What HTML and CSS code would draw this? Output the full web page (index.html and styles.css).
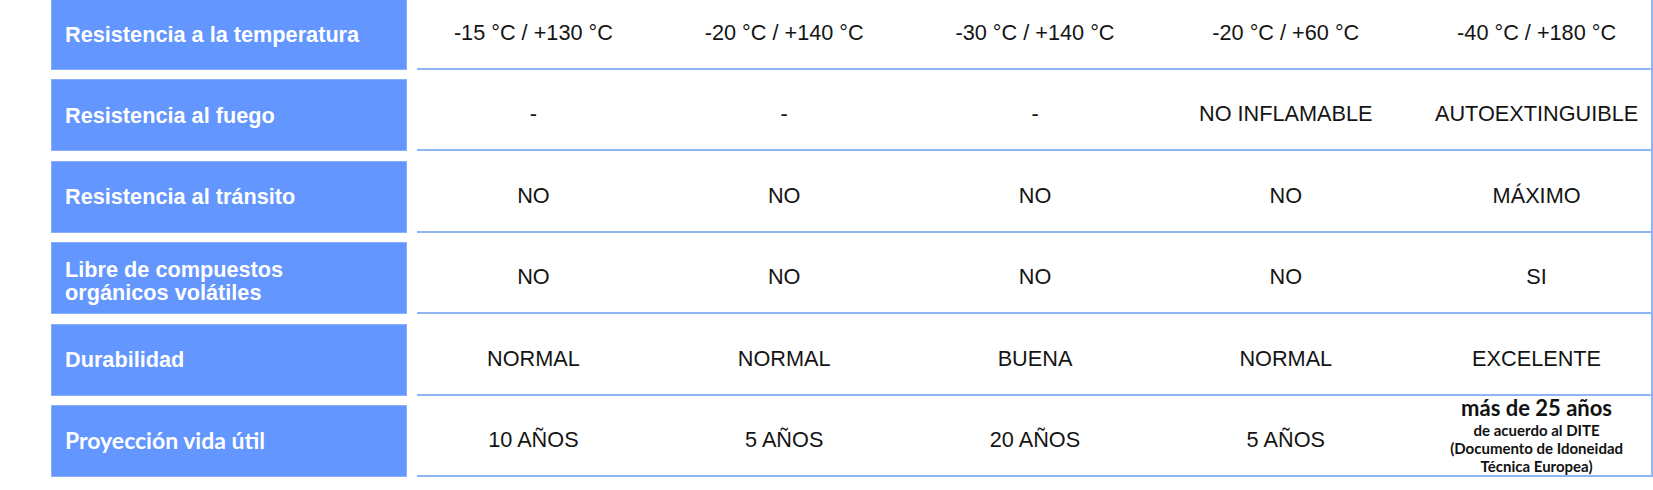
FILE: index.html
```html
<!DOCTYPE html>
<html lang="es">

<head>
    <meta charset="UTF-8">
    <meta name="viewport" content="width=device-width, initial-scale=1.0">
    <link rel="stylesheet" href="styles.css">
</head>

<body>
    <div class="spec-table">
        <div class="row">
            <div class="label">Resistencia a la temperatura</div>
            <div class="data">
                <div class="cells">
                    <div class="cell">-15 °C / +130 °C</div>
                    <div class="cell">-20 °C / +140 °C</div>
                    <div class="cell">-30 °C / +140 °C</div>
                    <div class="cell">-20 °C / +60 °C</div>
                    <div class="cell">-40 °C / +180 °C</div>
                </div>
            </div>
        </div>
        <div class="row">
            <div class="label">Resistencia al fuego</div>
            <div class="data">
                <div class="cells">
                    <div class="cell">-</div>
                    <div class="cell">-</div>
                    <div class="cell">-</div>
                    <div class="cell">NO INFLAMABLE</div>
                    <div class="cell">AUTOEXTINGUIBLE</div>
                </div>
            </div>
        </div>
        <div class="row">
            <div class="label">Resistencia al tránsito</div>
            <div class="data">
                <div class="cells">
                    <div class="cell">NO</div>
                    <div class="cell">NO</div>
                    <div class="cell">NO</div>
                    <div class="cell">NO</div>
                    <div class="cell">MÁXIMO</div>
                </div>
            </div>
        </div>
        <div class="row">
            <div class="label label-two">Libre de compuestos<br>orgánicos volátiles</div>
            <div class="data">
                <div class="cells">
                    <div class="cell">NO</div>
                    <div class="cell">NO</div>
                    <div class="cell">NO</div>
                    <div class="cell">NO</div>
                    <div class="cell">SI</div>
                </div>
            </div>
        </div>
        <div class="row">
            <div class="label">Durabilidad</div>
            <div class="data">
                <div class="cells">
                    <div class="cell">NORMAL</div>
                    <div class="cell">NORMAL</div>
                    <div class="cell">BUENA</div>
                    <div class="cell">NORMAL</div>
                    <div class="cell">EXCELENTE</div>
                </div>
            </div>
        </div>
        <div class="row row-last">
            <div class="label label-alt">Proyección vida útil</div>
            <div class="data">
                <div class="cells">
                    <div class="cell">10 AÑOS</div>
                    <div class="cell">5 AÑOS</div>
                    <div class="cell">20 AÑOS</div>
                    <div class="cell">5 AÑOS</div>
                    <div class="cell cell-note">
                        <div class="note">
                            <div class="note-big">más de 25 años</div>
                            <div>de acuerdo al DITE</div>
                            <div>(Documento de Idoneidad</div>
                            <div>Técnica Europea)</div>
                        </div>
                    </div>
                </div>
            </div>
        </div>
    </div>
</body>

</html>
```

FILE: styles.css
```css
/* comparison table */
body {
    margin: 0;
    background: #fff;
    overflow: hidden;
    font-family: "Liberation Sans", Arial, sans-serif;
}

.spec-table {
    margin: -2px 0 0 51px;
}

.row {
    display: flex;
    align-items: flex-start;
}

.label {
    flex: 0 0 356px;
    box-sizing: border-box;
    height: 72px;
    margin-right: 10px;
    padding-left: 13px;
    display: flex;
    align-items: center;
    background-color: #6396ff;
    border: 1px solid #88aefc;
    color: #fff;
    font-size: 21.7px;
    font-weight: bold;
    line-height: 23px;
}

.row + .row .label {
    margin-top: 9.4px;
}

.label-two {
    padding-top: 6px;
}

.label-alt {
    font-family: Lato, "Open Sans", sans-serif;
    font-size: 23px;
}

.data {
    flex: 1;
    min-width: 0;
    border-right: 2px solid #90b5f5;
    border-bottom: 2px solid #90b5f5;
}

.row + .row .data {
    padding-top: 9.4px;
}

/* columns run a bit wider than the lined area */
.cells {
    display: grid;
    grid-template-columns: repeat(5, 1fr);
    height: 70px;
    margin: 0 -11px 0 -9px;
}

.cell {
    display: flex;
    align-items: center;
    justify-content: center;
    color: #141414;
    font-size: 21.7px;
}

/* last row: the note needs more room, so it climbs into the gap */
.row + .row-last .data {
    padding-top: 1.4px;
}

.row-last .cells {
    height: 78px;
}

.row-last .cell {
    padding-top: 8px;
}

.row-last .cell-note {
    padding-top: 0;
}

.note {
    text-align: center;
    font-family: Lato, "Open Sans", sans-serif;
    font-weight: bold;
    font-size: 15px;
    line-height: 18px;
    color: #111;
}

.note-big {
    font-size: 22px;
    line-height: 22px;
    margin-bottom: 2px;
}
```
